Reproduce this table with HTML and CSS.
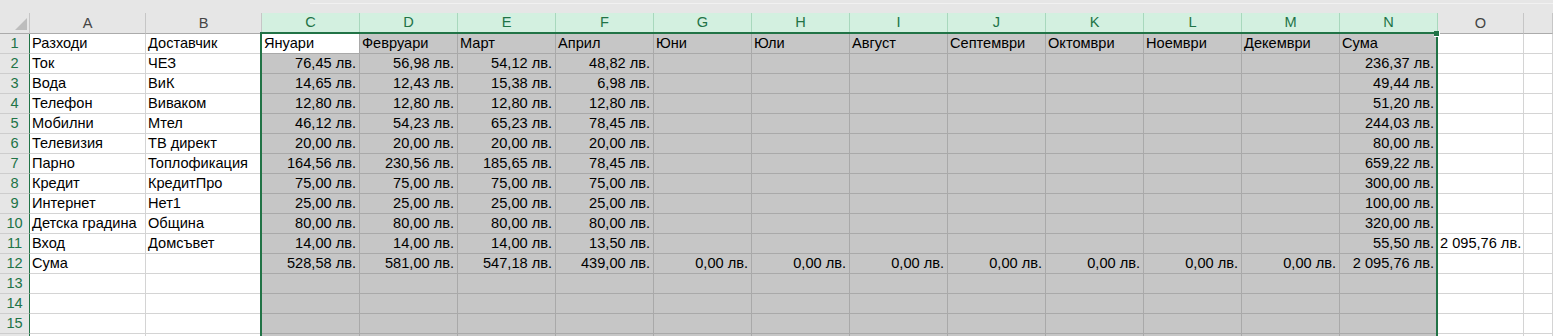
FILE: index.html
```html
<!DOCTYPE html>
<html lang="bg">
<head>
<meta charset="utf-8">
<title>Разходи</title>
<link rel="stylesheet" href="styles.css">
</head>
<body>
<div class="sheet">
  <div class="topstrip"><div class="fbar"></div></div>
  <div class="row hdr">
    <div class="corner"><span class="tri"></span></div>
    <div class="ch">A</div><div class="ch">B</div>
    <div class="ch on">C</div><div class="ch on">D</div><div class="ch on">E</div><div class="ch on">F</div>
    <div class="ch on">G</div><div class="ch on">H</div><div class="ch on">I</div><div class="ch on">J</div>
    <div class="ch on">K</div><div class="ch on">L</div><div class="ch on">M</div><div class="ch on">N</div>
    <div class="ch">O</div><div class="ch"></div>
  </div>

  <div class="row"><div class="rh">1</div><div class="c">Разходи</div><div class="c">Доставчик</div><div class="c act">Януари</div><div class="c s">Февруари</div><div class="c s">Март</div><div class="c s">Април</div><div class="c s">Юни</div><div class="c s">Юли</div><div class="c s">Август</div><div class="c s">Септември</div><div class="c s">Октомври</div><div class="c s">Ноември</div><div class="c s">Декември</div><div class="c s">Сума</div><div class="c"></div><div class="c"></div></div>

  <div class="row"><div class="rh">2</div><div class="c">Ток</div><div class="c">ЧЕЗ</div><div class="c s r">76,45 лв.</div><div class="c s r">56,98 лв.</div><div class="c s r">54,12 лв.</div><div class="c s r">48,82 лв.</div><div class="c s"></div><div class="c s"></div><div class="c s"></div><div class="c s"></div><div class="c s"></div><div class="c s"></div><div class="c s"></div><div class="c s r">236,37 лв.</div><div class="c"></div><div class="c"></div></div>

  <div class="row"><div class="rh">3</div><div class="c">Вода</div><div class="c">ВиК</div><div class="c s r">14,65 лв.</div><div class="c s r">12,43 лв.</div><div class="c s r">15,38 лв.</div><div class="c s r">6,98 лв.</div><div class="c s"></div><div class="c s"></div><div class="c s"></div><div class="c s"></div><div class="c s"></div><div class="c s"></div><div class="c s"></div><div class="c s r">49,44 лв.</div><div class="c"></div><div class="c"></div></div>

  <div class="row"><div class="rh">4</div><div class="c">Телефон</div><div class="c">Виваком</div><div class="c s r">12,80 лв.</div><div class="c s r">12,80 лв.</div><div class="c s r">12,80 лв.</div><div class="c s r">12,80 лв.</div><div class="c s"></div><div class="c s"></div><div class="c s"></div><div class="c s"></div><div class="c s"></div><div class="c s"></div><div class="c s"></div><div class="c s r">51,20 лв.</div><div class="c"></div><div class="c"></div></div>

  <div class="row"><div class="rh">5</div><div class="c">Мобилни</div><div class="c">Мтел</div><div class="c s r">46,12 лв.</div><div class="c s r">54,23 лв.</div><div class="c s r">65,23 лв.</div><div class="c s r">78,45 лв.</div><div class="c s"></div><div class="c s"></div><div class="c s"></div><div class="c s"></div><div class="c s"></div><div class="c s"></div><div class="c s"></div><div class="c s r">244,03 лв.</div><div class="c"></div><div class="c"></div></div>

  <div class="row"><div class="rh">6</div><div class="c">Телевизия</div><div class="c">ТВ директ</div><div class="c s r">20,00 лв.</div><div class="c s r">20,00 лв.</div><div class="c s r">20,00 лв.</div><div class="c s r">20,00 лв.</div><div class="c s"></div><div class="c s"></div><div class="c s"></div><div class="c s"></div><div class="c s"></div><div class="c s"></div><div class="c s"></div><div class="c s r">80,00 лв.</div><div class="c"></div><div class="c"></div></div>

  <div class="row"><div class="rh">7</div><div class="c">Парно</div><div class="c">Топлофикация</div><div class="c s r">164,56 лв.</div><div class="c s r">230,56 лв.</div><div class="c s r">185,65 лв.</div><div class="c s r">78,45 лв.</div><div class="c s"></div><div class="c s"></div><div class="c s"></div><div class="c s"></div><div class="c s"></div><div class="c s"></div><div class="c s"></div><div class="c s r">659,22 лв.</div><div class="c"></div><div class="c"></div></div>

  <div class="row"><div class="rh">8</div><div class="c">Кредит</div><div class="c">КредитПро</div><div class="c s r">75,00 лв.</div><div class="c s r">75,00 лв.</div><div class="c s r">75,00 лв.</div><div class="c s r">75,00 лв.</div><div class="c s"></div><div class="c s"></div><div class="c s"></div><div class="c s"></div><div class="c s"></div><div class="c s"></div><div class="c s"></div><div class="c s r">300,00 лв.</div><div class="c"></div><div class="c"></div></div>

  <div class="row"><div class="rh">9</div><div class="c">Интернет</div><div class="c">Нет1</div><div class="c s r">25,00 лв.</div><div class="c s r">25,00 лв.</div><div class="c s r">25,00 лв.</div><div class="c s r">25,00 лв.</div><div class="c s"></div><div class="c s"></div><div class="c s"></div><div class="c s"></div><div class="c s"></div><div class="c s"></div><div class="c s"></div><div class="c s r">100,00 лв.</div><div class="c"></div><div class="c"></div></div>

  <div class="row"><div class="rh">10</div><div class="c">Детска градина</div><div class="c">Община</div><div class="c s r">80,00 лв.</div><div class="c s r">80,00 лв.</div><div class="c s r">80,00 лв.</div><div class="c s r">80,00 лв.</div><div class="c s"></div><div class="c s"></div><div class="c s"></div><div class="c s"></div><div class="c s"></div><div class="c s"></div><div class="c s"></div><div class="c s r">320,00 лв.</div><div class="c"></div><div class="c"></div></div>

  <div class="row"><div class="rh">11</div><div class="c">Вход</div><div class="c">Домсъвет</div><div class="c s r">14,00 лв.</div><div class="c s r">14,00 лв.</div><div class="c s r">14,00 лв.</div><div class="c s r">13,50 лв.</div><div class="c s"></div><div class="c s"></div><div class="c s"></div><div class="c s"></div><div class="c s"></div><div class="c s"></div><div class="c s"></div><div class="c s r">55,50 лв.</div><div class="c r">2 095,76 лв.</div><div class="c"></div></div>

  <div class="row"><div class="rh">12</div><div class="c">Сума</div><div class="c"></div><div class="c s r">528,58 лв.</div><div class="c s r">581,00 лв.</div><div class="c s r">547,18 лв.</div><div class="c s r">439,00 лв.</div><div class="c s r">0,00 лв.</div><div class="c s r">0,00 лв.</div><div class="c s r">0,00 лв.</div><div class="c s r">0,00 лв.</div><div class="c s r">0,00 лв.</div><div class="c s r">0,00 лв.</div><div class="c s r">0,00 лв.</div><div class="c s r">2 095,76 лв.</div><div class="c"></div><div class="c"></div></div>

  <div class="row"><div class="rh">13</div><div class="c"></div><div class="c"></div><div class="c s"></div><div class="c s"></div><div class="c s"></div><div class="c s"></div><div class="c s"></div><div class="c s"></div><div class="c s"></div><div class="c s"></div><div class="c s"></div><div class="c s"></div><div class="c s"></div><div class="c s"></div><div class="c"></div><div class="c"></div></div>

  <div class="row"><div class="rh">14</div><div class="c"></div><div class="c"></div><div class="c s"></div><div class="c s"></div><div class="c s"></div><div class="c s"></div><div class="c s"></div><div class="c s"></div><div class="c s"></div><div class="c s"></div><div class="c s"></div><div class="c s"></div><div class="c s"></div><div class="c s"></div><div class="c"></div><div class="c"></div></div>

  <div class="row"><div class="rh">15</div><div class="c"></div><div class="c"></div><div class="c s"></div><div class="c s"></div><div class="c s"></div><div class="c s"></div><div class="c s"></div><div class="c s"></div><div class="c s"></div><div class="c s"></div><div class="c s"></div><div class="c s"></div><div class="c s"></div><div class="c s"></div><div class="c"></div><div class="c"></div></div>

  <div class="row"><div class="rh"></div><div class="c"></div><div class="c"></div><div class="c s"></div><div class="c s"></div><div class="c s"></div><div class="c s"></div><div class="c s"></div><div class="c s"></div><div class="c s"></div><div class="c s"></div><div class="c s"></div><div class="c s"></div><div class="c s"></div><div class="c s"></div><div class="c"></div><div class="c"></div></div>

  <div class="selection"></div>
  <div class="handle"></div>
</div>
</body>
</html>
```
FILE: styles.css
```css
html, body {
  margin: 0;
  padding: 0;
  background: #ffffff;
  overflow: hidden;
}
.sheet {
  position: relative;
  width: 1553px;
  height: 336px;
  overflow: hidden;
  font-family: "Liberation Sans", Arial, sans-serif;
  font-size: 14.6px;
  color: #000;
}
.topstrip {
  height: 13px;
  background: #e6e6e6;
  display: flex;
  flex-direction: column;
  align-items: flex-end;
}
.fbar {
  margin-top: 3px;
  width: 1243px;
  height: 1px;
  background: #f1f1f1;
}
.row {
  display: grid;
  grid-template-columns: 30px 116px 116px repeat(12, 98px) 86px 1fr;
  height: 20px;
}
.row.hdr {
  height: 21px;
}
.corner {
  background: #e6e6e6;
  border-right: 1px solid #c6c6c6;
  border-bottom: 1px solid #ababab;
  box-sizing: border-box;
  display: flex;
  align-items: flex-end;
  justify-content: flex-end;
  padding: 0 2px 3px 0;
}
.tri {
  width: 0;
  height: 0;
  border-left: 12px solid transparent;
  border-bottom: 12px solid #bdbdbd;
}
.ch {
  background: #e6e6e6;
  border-right: 1px solid #c6c6c6;
  border-bottom: 1px solid #ababab;
  box-sizing: border-box;
  text-align: center;
  line-height: 20px;
  font-size: 14.6px;
  color: #444;
}
.ch.on {
  background: #d3f0e0;
  color: #217346;
  border-right-color: #a8d8bd;
  border-bottom: 2px solid #217346;
  line-height: 19px;
}
.rh {
  background: #e6e6e6;
  border-right: 1px solid #217346;
  border-bottom: 1px solid #cdcdcd;
  box-sizing: border-box;
  text-align: center;
  line-height: 19px;
  font-size: 14.6px;
  color: #217346;
}
.c {
  border-right: 1px solid #d4d4d4;
  border-bottom: 1px solid #d4d4d4;
  box-sizing: border-box;
  line-height: 19px;
  padding: 0 3px 0 2px;
  white-space: nowrap;
  overflow: visible;
}
.c.s {
  background: #c6c6c6;
  border-color: #a9a9a9;
}
.c.act {
  background: #ffffff;
  border-color: #a9a9a9;
}
.c.r {
  text-align: right;
}
.selection {
  position: absolute;
  left: 260px;
  top: 32px;
  width: 1178px;
  height: 320px;
  border: 2px solid #217346;
  box-sizing: border-box;
  pointer-events: none;
}
.handle {
  position: absolute;
  left: 1434px;
  top: 31px;
  width: 5px;
  height: 5px;
  background: #217346;
  border-right: 1px solid #ffffff;
  border-bottom: 1px solid #ffffff;
}
```
